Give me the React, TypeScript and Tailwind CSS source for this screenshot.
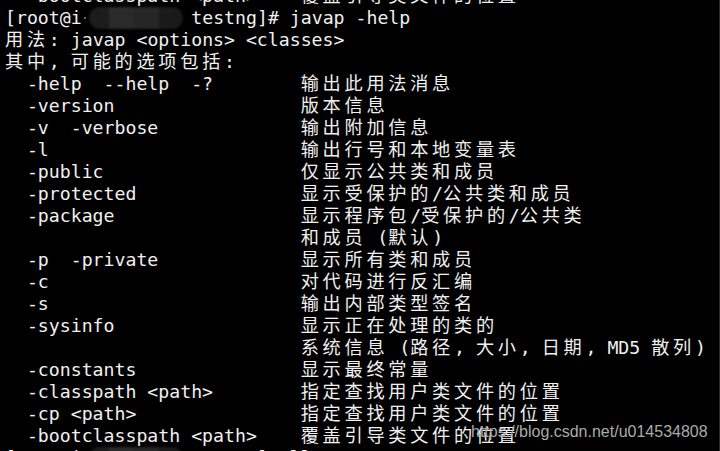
import React from "react";

const COL = 27;

// terminal rows: [option, description]
const rows: [string, string][] = [
  ["  -help  --help  -?", "输出此用法消息"],
  ["  -version", "版本信息"],
  ["  -v  -verbose", "输出附加信息"],
  ["  -l", "输出行号和本地变量表"],
  ["  -public", "仅显示公共类和成员"],
  ["  -protected", "显示受保护的/公共类和成员"],
  ["  -package", "显示程序包/受保护的/公共类"],
  ["", "和成员 (默认)"],
  ["  -p  -private", "显示所有类和成员"],
  ["  -c", "对代码进行反汇编"],
  ["  -s", "输出内部类型签名"],
  ["  -sysinfo", "显示正在处理的类的"],
  ["", "系统信息 (路径, 大小, 日期, MD5 散列)"],
  ["  -constants", "显示最终常量"],
  ["  -classpath <path>", "指定查找用户类文件的位置"],
  ["  -cp <path>", "指定查找用户类文件的位置"],
  ["  -bootclasspath <path>", "覆盖引导类文件的位置"],
];

const isWide = (ch: string) => /[\u3000-\u9fff\uff00-\uffef]/.test(ch);

// CJK glyphs take two terminal cells
function Txt({ s }: { s: string }) {
  const parts: { wide: boolean; t: string }[] = [];
  for (const ch of s) {
    const w = isWide(ch);
    const last = parts[parts.length - 1];
    if (last && last.wide === w) last.t += ch;
    else parts.push({ wide: w, t: ch });
  }
  return (
    <>
      {parts.map((p, i) =>
        p.wide ? (
          <span key={i} className="tracking-[3.72px]">
            {p.t}
          </span>
        ) : (
          <span key={i}>{p.t}</span>
        )
      )}
    </>
  );
}

function Line({ children }: { children: React.ReactNode }) {
  return <div className="h-[22px] leading-[22px]">{children}</div>;
}

function Row({ opt, desc }: { opt: string; desc: string }) {
  return (
    <Line>
      <Txt s={opt.padEnd(COL, " ") + desc} />
    </Line>
  );
}

function Blur() {
  return (
    <span className="inline-flex h-[22px] w-[109.6px] items-center align-top">
      <span className="ml-[2.5px] h-[2px] w-[2px] bg-[#6a6a6a]" />
      <span className="ml-[3px] flex h-[22px] w-[94px] overflow-hidden rounded-[11px] blur-[1px]">
        <span className="h-full w-[20px] bg-[#1c1c1c]" />
        <span className="h-full w-[24px] bg-[#2a2a2a]" />
        <span className="h-full w-[26px] bg-[#262626]" />
        <span className="h-full w-[24px] bg-[#1a1a1a]" />
      </span>
    </span>
  );
}

function Prompt({ cmd }: { cmd: string }) {
  return (
    <Line>
      <span>[root@i</span>
      <Blur />
      <span>{"testng]# " + cmd}</span>
    </Line>
  );
}

export default function App() {
  return (
    <div className="relative h-[451px] w-[720px] overflow-hidden border-r border-[#2c2c2c] bg-black">
      <div
        className="mt-[-15px] whitespace-pre pl-[5px] text-[18.2px] text-[#f0f0f0]"
        style={{ fontFamily: "'DejaVu Sans Mono', 'Noto Sans CJK SC', monospace" }}
      >
        <Row opt="  -bootclasspath <path>" desc="覆盖引导类文件的位置" />
        <Prompt cmd="javap -help" />
        <Line>
          <Txt s="用法: javap <options> <classes>" />
        </Line>
        <Line>
          <Txt s="其中, 可能的选项包括:" />
        </Line>
        {rows.map(([o, d], i) => (
          <Row key={i} opt={o} desc={d} />
        ))}
        <Prompt cmd="ll" />
      </div>
      <div
        className="absolute left-[471px] top-[423.5px] text-[16px] leading-[16px] text-[#ababab]"
        style={{ fontFamily: "'Liberation Sans', Arial, sans-serif" }}
      >
        https://blog.csdn.net/u014534808
      </div>
    </div>
  );
}
